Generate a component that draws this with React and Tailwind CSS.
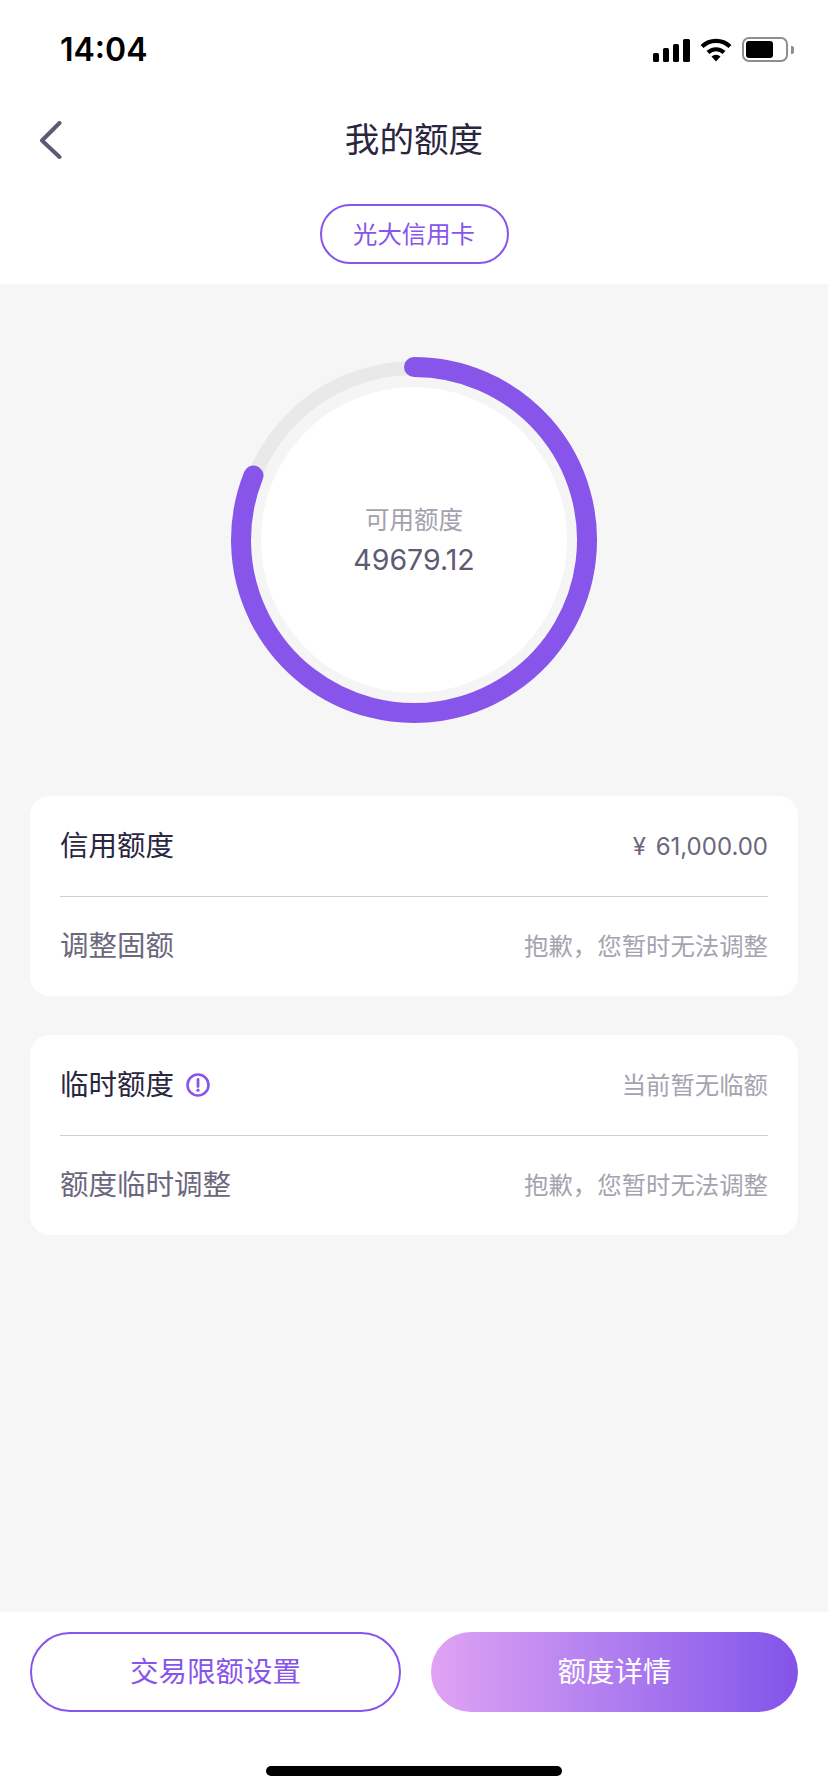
const PURPLE = "#8855ea";

const StatusIcons = () => (
    <div className="flex items-center gap-[10px]">
        <div className="flex items-end gap-1 h-[24px]">
            <div className="w-[6px] h-[9px] rounded-[1.5px] bg-black" />
            <div className="w-[6px] h-[14px] rounded-[1.5px] bg-black" />
            <div className="w-[6px] h-[18px] rounded-[1.5px] bg-black" />
            <div className="w-[7px] h-[23px] rounded-[1.5px] bg-black" />
        </div>
        <svg width="32" height="24" viewBox="0 0 32 24" fill="none">
            <path d="M2 8.5A20 20 0 0 1 30 8.5" stroke="#000" strokeWidth="4.2" />
            <path d="M8 14.5A11.5 11.5 0 0 1 24 14.5" stroke="#000" strokeWidth="4.2" />
            <path d="M11.5 18.5A6.5 6.5 0 0 1 20.5 18.5L16 23.5Z" fill="#000" />
        </svg>
        <div className="flex items-center gap-[3px]">
            <div className="w-[46px] h-[25px] rounded-[7px] border-2 border-[#8e8e8e] p-[2px]">
                <div className="w-[27px] h-full rounded-[3px] bg-black" />
            </div>
            <div className="w-[3px] h-[8px] rounded-r-[2px] bg-[#8e8e8e]" />
        </div>
    </div>
);

const CreditRing = () => (
    <div className="relative h-[400px] w-[400px] mx-auto flex flex-col items-center justify-center">
        <svg className="absolute inset-0" width="400" height="400" viewBox="0 0 400 400" fill="none">
            <circle cx="200" cy="200" r="165" fill="#f5f5f5" />
            <circle cx="200" cy="200" r="172" stroke="#e9e9e9" strokeWidth="14" />
            <circle cx="200" cy="200" r="153" fill="#fff" />
            <path
                d="M200 27A173 173 0 1 1 39.5 135.5"
                stroke={PURPLE}
                strokeWidth="20"
                strokeLinecap="round"
            />
        </svg>
        <div className="relative text-[24.5px] leading-[36px] text-[#a3a1ae]">可用额度</div>
        <div className="relative mt-[4px] text-[28.5px] leading-[36px] text-[#5f5a73]">49679.12</div>
    </div>
);

const Row = ({ label, value, dark, valueDark, divider, children }) => (
    <div className={`flex items-center justify-between ${divider ? "h-[101px] border-b border-[#d0d0d0]" : "h-[99px]"}`}>
        <div className="flex items-center gap-[12px]">
            <span className={`text-[28.5px] ${dark ? "text-[#2a2640]" : "text-[#6b677d]"}`}>{label}</span>
            {children}
        </div>
        <span className={`text-[24.4px] ${valueDark ? "text-[#6b677d]" : "text-[#a5a3b0]"}`}>{value}</span>
    </div>
);

const InfoIcon = () => (
    <svg width="24" height="24" viewBox="0 0 24 24" fill="none">
        <circle cx="12" cy="12" r="10.5" stroke={PURPLE} strokeWidth="2.6" />
        <path d="M12 6.5V13.5" stroke={PURPLE} strokeWidth="2.8" strokeLinecap="round" />
        <circle cx="12" cy="17.2" r="1.6" fill={PURPLE} />
    </svg>
);

const App = () => {
    return (
        <div className="w-[828px] h-[1792px] flex flex-col bg-white font-['Inter','Noto_Sans_CJK_SC',sans-serif]">
            <div className="h-[88px] pt-[37px] pl-[60px] pr-[34px] flex items-start justify-between">
                <span className="text-[32px] leading-[25px] font-semibold text-black">14:04</span>
                <StatusIcons />
            </div>

            <div className="h-[104px] px-[40px] grid grid-cols-[1fr_auto_1fr] items-center">
                <svg width="22" height="38" viewBox="0 0 22 38" fill="none">
                    <path d="M19.5 2L2 19.5L19.5 36" stroke="#5f5a73" strokeWidth="4" strokeLinecap="round" strokeLinejoin="round" />
                </svg>
                <span className="text-[34.6px] text-[#2a2640]">我的额度</span>
            </div>

            <div className="mt-[12px] pb-[20px] flex justify-center">
                <div className="w-[189px] h-[60px] rounded-full border-2 border-[#8855ea] flex items-center justify-center text-[24.4px] text-[#8855ea]">
                    光大信用卡
                </div>
            </div>

            <div className="flex-1 bg-[#f6f6f6] pt-[56px] px-[30px]">
                <CreditRing />

                <div className="mt-[56px] h-[200px] rounded-[20px] bg-white px-[30px]">
                    <Row
                        label="信用额度"
                        value={<span className="text-[24px] [word-spacing:3px]">¥ 61,000.00</span>}
                        dark
                        valueDark
                        divider
                    />
                    <Row label="调整固额" value="抱歉，您暂时无法调整" />
                </div>

                <div className="mt-[39px] h-[200px] rounded-[20px] bg-white px-[30px]">
                    <Row label="临时额度" value="当前暂无临额" dark divider>
                        <InfoIcon />
                    </Row>
                    <Row label="额度临时调整" value="抱歉，您暂时无法调整" />
                </div>
            </div>

            <div className="h-[180px] pt-[20px] px-[30px]">
                <div className="flex gap-[30px]">
                    <button className="flex-1 h-[80px] rounded-full border-2 border-[#8855ea] text-[28.5px] text-[#8855ea]">
                        交易限额设置
                    </button>
                    <button className="flex-1 h-[80px] rounded-full bg-gradient-to-r from-[#e0a2f4] to-[#8353e8] text-[28.5px] text-white">
                        额度详情
                    </button>
                </div>
                <div className="mt-[54px] mx-auto w-[296px] h-[10px] rounded-full bg-black" />
            </div>
        </div>
    );
};

export default App;
